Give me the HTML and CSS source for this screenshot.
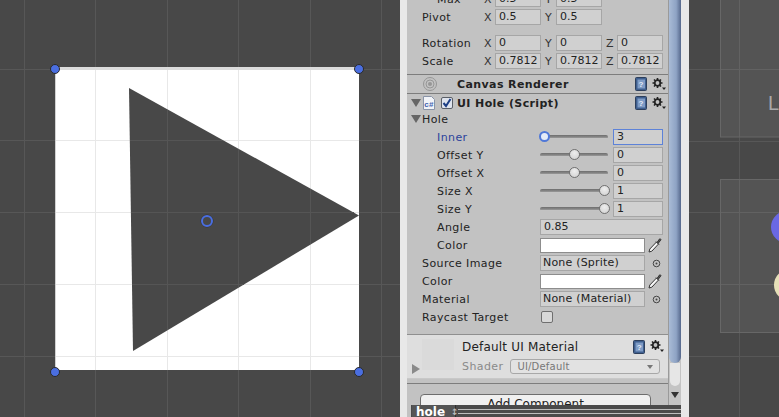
FILE: index.html
```html
<!DOCTYPE html>
<html lang="en">
<head>
  <meta charset="UTF-8" />
  <title>UI Hole Inspector</title>
  <link rel="stylesheet" href="styles.css">
</head>
<body>
  <svg class="defs" width="0" height="0">
    <symbol id="help" viewBox="0 0 12 14">
      <rect x="0.500" y="0.500" width="11" height="13" rx="1" fill="#3f5f8f" stroke="#2d3f5c"/>
      <rect x="2.500" y="2.500" width="7.500" height="9" fill="#7f9cc6"/>
      <text x="6.200" y="10.300" font-size="8" font-family="Liberation Sans" font-weight="bold" text-anchor="middle" fill="#e4ecf6">?</text>
    </symbol>
    <symbol id="gear" viewBox="0 0 14 13">
      <path d="M5.500 0v10M.5 5h10M2 1.500l7 7M9 1.500l-7 7" stroke="#222222" stroke-width="1.600"/>
      <circle cx="5.500" cy="5" r="2.800" fill="#c2c2c2" stroke="#222222" stroke-width="1.800"/>
      <path d="M10 9.500h4l-2 2.600z" fill="#222222"/>
    </symbol>
    <symbol id="dropper" viewBox="0 0 14 16">
      <path d="M1 15l.8-3L8.500 5l2 2-6.700 7.200z" fill="#f6f6f6" stroke="#333"/>
      <path d="M8 4.500l1 1 2.500-3.500c.6-.8 1.800.3 1.200 1.200L10 6.500l1 1" fill="#555" stroke="#333"/>
    </symbol>
    <symbol id="picker" viewBox="0 0 9 9">
      <circle cx="4.500" cy="4.500" r="3.300" fill="none" stroke="#444"/>
      <circle cx="4.500" cy="4.500" r="1" fill="#444"/>
    </symbol>
  </svg>

  <div class="app">
    <div class="scene scene-left">
      <svg width="400" height="417" viewBox="0 0 400 417">
        <g stroke="#575757">
          <path d="M24.500 0v417M95.500 0v417M167.500 0v417M238.500 0v417M310.500 0v417M381.500 0v417"/>
          <path d="M0 69.500h400M0 140.500h400M0 212.500h400M0 284.500h400M0 356.500h400"/>
        </g>
        <rect x="55" y="68" width="304" height="302" fill="#fff"/>
        <path d="M55 68.500h304" stroke="#dcdcdc" stroke-width="3"/>
        <path d="M55.500 68v302" stroke="#d2d2d2"/>
        <g stroke="#e8e8e8">
          <path d="M95.500 70v300M167.500 70v300M238.500 70v300M310.500 70v300"/>
          <path d="M56 140.500h303M56 212.500h303M56 284.500h303M56 356.500h303"/>
        </g>
        <path d="M129 88L359 215.500 133 351z" fill="#484848"/>
        <g stroke="#555555">
          <path d="M167.500 110v220M238.500 149v138M310.500 189v55"/>
          <path d="M130 140.500h93M131 212.500h223M132 284.500h112"/>
        </g>
        <g fill="#4a6ee0" stroke="#2a2a2a">
          <circle cx="55" cy="69" r="4.500"/>
          <circle cx="359" cy="69" r="4.500"/>
          <circle cx="55" cy="372" r="4.500"/>
          <circle cx="359" cy="372" r="4.500"/>
        </g>
        <circle cx="207" cy="221" r="6" fill="none" stroke="#333" />
        <circle cx="207" cy="221" r="5" fill="none" stroke="#4a6ee0" stroke-width="2"/>
      </svg>
    </div>

    <div class="inspector">
      <div class="panel">
        <div class="body">
          <div class="row row-clip">
            <span class="label label-transform indent-max">Max</span>
            <div class="axes">
              <span class="axis">X</span><span class="field">0.5</span>
              <span class="axis">Y</span><span class="field">0.5</span>
            </div>
          </div>
          <div class="row">
            <span class="label label-transform">Pivot</span>
            <div class="axes">
              <span class="axis">X</span><span class="field">0.5</span>
              <span class="axis">Y</span><span class="field">0.5</span>
            </div>
          </div>
          <div class="row row-gap">
            <span class="label label-transform">Rotation</span>
            <div class="axes">
              <span class="axis">X</span><span class="field">0</span>
              <span class="axis">Y</span><span class="field">0</span>
              <span class="axis">Z</span><span class="field">0</span>
            </div>
          </div>
          <div class="row">
            <span class="label label-transform">Scale</span>
            <div class="axes">
              <span class="axis">X</span><span class="field">0.7812</span>
              <span class="axis">Y</span><span class="field">0.7812</span>
              <span class="axis">Z</span><span class="field">0.7812</span>
            </div>
          </div>

          <div class="header header-first">
            <svg class="renderer-icon" width="18" height="14" viewBox="0 0 18 14">
              <g fill="none" stroke="#969696">
                <circle cx="9" cy="7" r="6.500"/>
                <circle cx="9" cy="7" r="4"/>
              </g>
              <circle cx="9" cy="7" r="2" fill="#969696"/>
            </svg>
            <span class="title">Canvas Renderer</span>
            <svg class="icon-help"><use href="#help"/></svg>
            <svg class="icon-gear"><use href="#gear"/></svg>
          </div>

          <div class="header header-script">
            <span class="fold"></span>
            <svg class="script-icon" width="12" height="14" viewBox="0 0 12 14">
              <path d="M.5.500h8l3 3v10h-11z" fill="#f2f4f8" stroke="#8a94a8"/>
              <text x="6" y="10.500" font-size="8" font-family="Liberation Sans" font-weight="bold" text-anchor="middle" fill="#3f62b0">c#</text>
            </svg>
            <svg class="check" width="12" height="12" viewBox="0 0 12 12">
              <rect x=".5" y=".5" width="11" height="11" rx="1.500" fill="#dfe4ee" stroke="#5a5f68"/>
              <path d="M2.500 6l2.500 3 4.500-7" fill="none" stroke="#1d3f86" stroke-width="2"/>
            </svg>
            <span class="title">UI Hole (Script)</span>
            <svg class="icon-help"><use href="#help"/></svg>
            <svg class="icon-gear"><use href="#gear"/></svg>
          </div>

          <div class="row row-fold">
            <span class="fold"></span>
            <span>Hole</span>
          </div>

          <div class="row row-nested">
            <span class="label label-active">Inner</span>
            <div class="slider"><span class="thumb thumb-active" style="left: 0px"></span></div>
            <span class="field field-num field-focus">3</span>
          </div>
          <div class="row row-nested">
            <span class="label">Offset Y</span>
            <div class="slider"><span class="thumb" style="left: 30px"></span></div>
            <span class="field field-num">0</span>
          </div>
          <div class="row row-nested">
            <span class="label">Offset X</span>
            <div class="slider"><span class="thumb" style="left: 30px"></span></div>
            <span class="field field-num">0</span>
          </div>
          <div class="row row-nested">
            <span class="label">Size X</span>
            <div class="slider"><span class="thumb" style="left: 60px"></span></div>
            <span class="field field-num">1</span>
          </div>
          <div class="row row-nested">
            <span class="label">Size Y</span>
            <div class="slider"><span class="thumb" style="left: 60px"></span></div>
            <span class="field field-num">1</span>
          </div>
          <div class="row row-nested">
            <span class="label">Angle</span>
            <span class="field field-wide">0.85</span>
          </div>
          <div class="row row-nested">
            <span class="label">Color</span>
            <span class="swatch"></span>
            <svg class="icon-dropper"><use href="#dropper"/></svg>
          </div>
          <div class="row">
            <span class="label">Source Image</span>
            <span class="field field-object">None (Sprite)</span>
            <svg class="icon-picker"><use href="#picker"/></svg>
          </div>
          <div class="row">
            <span class="label">Color</span>
            <span class="swatch"></span>
            <svg class="icon-dropper"><use href="#dropper"/></svg>
          </div>
          <div class="row">
            <span class="label">Material</span>
            <span class="field field-object">None (Material)</span>
            <svg class="icon-picker"><use href="#picker"/></svg>
          </div>
          <div class="row">
            <span class="label">Raycast Target</span>
            <span class="checkbox"></span>
          </div>

          <div class="material">
            <div class="preview"></div>
            <span class="preview-arrow"></span>
            <div class="material-info">
              <div class="material-title">
                <span>Default UI Material</span>
                <svg class="icon-help"><use href="#help"/></svg>
                <svg class="icon-gear"><use href="#gear"/></svg>
              </div>
              <div class="material-shader">
                <span class="shader-label">Shader</span>
                <span class="dropdown">UI/Default<span class="dropdown-arrow"></span></span>
              </div>
            </div>
          </div>

          <div class="add-area">
            <div class="add-button">Add Component</div>
          </div>
        </div>

        <div class="scrollbar">
          <div class="scroll-thumb"></div>
          <div class="scroll-rest"></div>
          <div class="scroll-down"></div>
        </div>
      </div>

      <div class="toolbar">
        <span class="tab">hole<span class="tab-arrows">&#8597;</span></span>
        <span class="toolbar-lines"></span>
      </div>
    </div>

    <div class="scene scene-right">
      <svg width="90" height="417" viewBox="689 0 90 417">
        <g stroke="#575757">
          <path d="M739.500 0v417"/>
          <path d="M689 69.500h90M689 141.500h90M689 212.500h90M689 284.500h90M689 356.500h90"/>
        </g>
        <rect x="720.500" y="-2" width="70" height="139" fill="#fff" fill-opacity=".07" stroke="#676767"/>
        <rect x="720.500" y="179.500" width="70" height="153" fill="#fff" fill-opacity=".07" stroke="#676767"/>
        <text x="768" y="110" font-size="20" font-family="Liberation Sans" fill="#a9a9a9">L</text>
        <circle cx="787" cy="227" r="16" fill="#6a68e4"/>
        <circle cx="790" cy="285" r="16" fill="#e6e0b8"/>
      </svg>
    </div>
  </div>
</body>
</html>
```

FILE: styles.css
```css
/* Basic reset */
* {
  margin: 0;
  padding: 0;
  box-sizing: border-box;
}

body {
  width: 779px;
  height: 417px;
  overflow: hidden;
  background-color: #484848;
  color: #222222;
  font-family: "DejaVu Sans", sans-serif;
  font-size: 11px;
  letter-spacing: 0.4px;
}

.defs {
  display: block;
  height: 0;
}

.app {
  display: flex;
  height: 417px;
}

/* Scene view */
.scene {
  flex: none;
  background-color: #484848;
}
.scene svg {
  display: block;
}
.scene-left {
  width: 400px;
}
.scene-right {
  width: 90px;
}

/* Inspector */
.inspector {
  flex: none;
  width: 289px;
  display: flex;
  flex-direction: column;
  background-color: #e8e8e8;
  padding: 0 8px 0 7px;
}

.panel {
  display: flex;
  height: 405px;
  overflow: hidden;
}

.body {
  width: 261px;
  flex: none;
  background-color: #c2c2c2;
}

.row {
  display: flex;
  align-items: center;
  height: 18px;
  padding-left: 15px;
  white-space: nowrap;
}
.row-clip {
  margin-top: -10px;
}
.row-gap {
  margin-top: 8px;
}
.row-nested {
  padding-left: 30px;
}
.row-fold {
  gap: 1px;
  height: 16px;
  padding: 0 0 2px 4px;
}

.label {
  flex: none;
  width: 118px;
}
.row-nested .label {
  width: 103px;
}
.label-transform {
  width: 58px;
}
.indent-max {
  padding-left: 15px;
}
.label-active {
  color: #2b429c;
}

.axes {
  display: grid;
  grid-template-columns: repeat(3, 15px 46px);
  align-items: center;
}
.axis {
  padding-left: 4px;
  color: #333333;
}

.field {
  display: block;
  height: 16px;
  line-height: 14px;
  padding-left: 3px;
  letter-spacing: 0;
  background-color: #d0d0d0;
  border: 1px solid #a6a6a6;
  white-space: nowrap;
  overflow: hidden;
}
.field-num {
  width: 50px;
  margin-left: 5px;
}
.field-focus {
  border-color: #5d82d8;
  background-color: #cfcfcf;
}
.field-wide {
  width: 123px;
}
.field-object {
  width: 105px;
  padding-left: 2px;
  letter-spacing: 0.2px;
}

.slider {
  position: relative;
  width: 68px;
  height: 4px;
  background: linear-gradient(#6e6e6e, #8c8c8c 60%, #dcdcdc);
  border-radius: 2px;
}
.thumb {
  position: absolute;
  top: -4px;
  width: 11px;
  height: 11px;
  margin-left: -1px;
  border-radius: 50%;
  background: radial-gradient(circle at 50% 35%, #eeeeee, #cfcfcf);
  border: 1px solid #707070;
}
.thumb-active {
  background: #e4ebf8;
  border: 2px solid #4f78d8;
}

.swatch {
  flex: none;
  width: 105px;
  height: 15px;
  background-color: #ffffff;
  border: 1px solid #8d8d8d;
}
.icon-dropper {
  width: 14px;
  height: 16px;
  margin-left: 3px;
}
.icon-picker {
  width: 9px;
  height: 9px;
  margin-left: 7px;
}
.checkbox {
  width: 12px;
  height: 12px;
  margin-left: 1px;
  background-color: #d8d8d8;
  border: 1px solid #6f6f6f;
  border-radius: 2px;
}

/* Component headers */
.header {
  display: flex;
  align-items: center;
  height: 19px;
  border-top: 1px solid #7d7d7d;
}
.header-first {
  margin-top: 4px;
  padding-left: 14px;
}
.header-script {
  padding-left: 4px;
}
.title {
  font-weight: bold;
  flex: 1;
  white-space: nowrap;
}
.renderer-icon {
  margin-right: 18px;
}
.script-icon {
  margin: 0 6px 0 2px;
}
.check {
  margin-right: 4px;
}
.icon-help {
  flex: none;
  width: 12px;
  height: 14px;
}
.icon-gear {
  flex: none;
  width: 14px;
  height: 13px;
  margin: 0 2px 0 5px;
}
.fold {
  flex: none;
  width: 0;
  height: 0;
  border-left: 5px solid transparent;
  border-right: 5px solid transparent;
  border-top: 8px solid #666666;
}

/* Material block */
.material {
  position: relative;
  display: flex;
  height: 44px;
  margin-top: 8px;
  padding: 4px 2px 0 15px;
  border-top: 1px solid #8f8f8f;
  background-color: #dedede;
}
.preview {
  flex: none;
  width: 32px;
  height: 31px;
  margin-right: 8px;
  background-color: #dadada;
}
.preview-arrow {
  position: absolute;
  left: 5px;
  top: 29px;
  border-top: 5px solid transparent;
  border-bottom: 5px solid transparent;
  border-left: 8px solid #8a8a8a;
}
.material-info {
  flex: 1;
}
.material-title {
  display: flex;
  align-items: center;
  height: 15px;
  font-size: 12px;
  letter-spacing: 0.2px;
}
.material-title span {
  flex: 1;
}
.material-shader {
  display: flex;
  align-items: center;
  gap: 7px;
  margin-top: 5px;
}
.shader-label {
  color: #8a8a8a;
}
.dropdown {
  position: relative;
  width: 150px;
  height: 15px;
  line-height: 13px;
  padding-left: 6px;
  font-size: 10px;
  letter-spacing: 0.2px;
  color: #777777;
  border: 1px solid #a8a8a8;
  border-radius: 3px;
  background-color: #e2e2e2;
}
.dropdown-arrow {
  position: absolute;
  right: 6px;
  top: 5px;
  border-left: 3px solid transparent;
  border-right: 3px solid transparent;
  border-top: 4px solid #777777;
}

/* Add component area */
.add-area {
  position: relative;
  height: 40px;
  padding: 15px 17px 0 13px;
  border-top: 1px solid #c8c8c8;
}
.add-area::before {
  content: "";
  display: block;
  position: absolute;
  top: 4px;
  left: 0;
  right: 0;
  border-top: 1px solid #7d7d7d;
}
.add-button {
  height: 22px;
  line-height: 18px;
  text-align: center;
  font-size: 12px;
  letter-spacing: 0;
  background-color: #f0f0f0;
  border: 1px solid #6d6d6d;
  border-radius: 4px;
}

/* Scrollbar */
.scrollbar {
  flex: 1;
  display: flex;
  flex-direction: column;
  background-color: #c4c4c4;
  border-left: 1px solid #9a9a9a;
}
.scroll-thumb {
  height: 363px;
  background: linear-gradient(to right, #a9bbd6, #8ea3c4 60%, #56688c);
  border-radius: 0 0 6px 6px;
}
.scroll-rest {
  height: 23px;
  margin: 0 1px;
  background-color: #e6e6e6;
  border-radius: 0 0 5px 5px;
}
.scroll-down {
  width: 0;
  height: 0;
  margin: 6px 0 0 2px;
  border-left: 4px solid transparent;
  border-right: 4px solid transparent;
  border-top: 6px solid #333333;
}

/* Bottom toolbar */
.toolbar {
  display: flex;
  align-items: center;
  height: 12px;
  background-color: #4a4a4a;
  border-left: 4px solid #c2c2c2;
  overflow: hidden;
}
.tab {
  flex: none;
  display: flex;
  align-items: flex-start;
  gap: 6px;
  width: 44px;
  height: 12px;
  padding-left: 4px;
  margin-left: 1px;
  border-right: 1px solid #2f2f2f;
  background-color: #555555;
  color: #ffffff;
  font-weight: bold;
  font-size: 12px;
  letter-spacing: 0;
  line-height: 15px;
}
.tab-arrows {
  color: #bbbbbb;
  font-size: 9px;
  line-height: 14px;
}
.toolbar-lines {
  flex: 1;
  height: 5px;
  margin-left: 2px;
  border-top: 1px solid #bdbdbd;
  border-bottom: 1px solid #bdbdbd;
}
```
